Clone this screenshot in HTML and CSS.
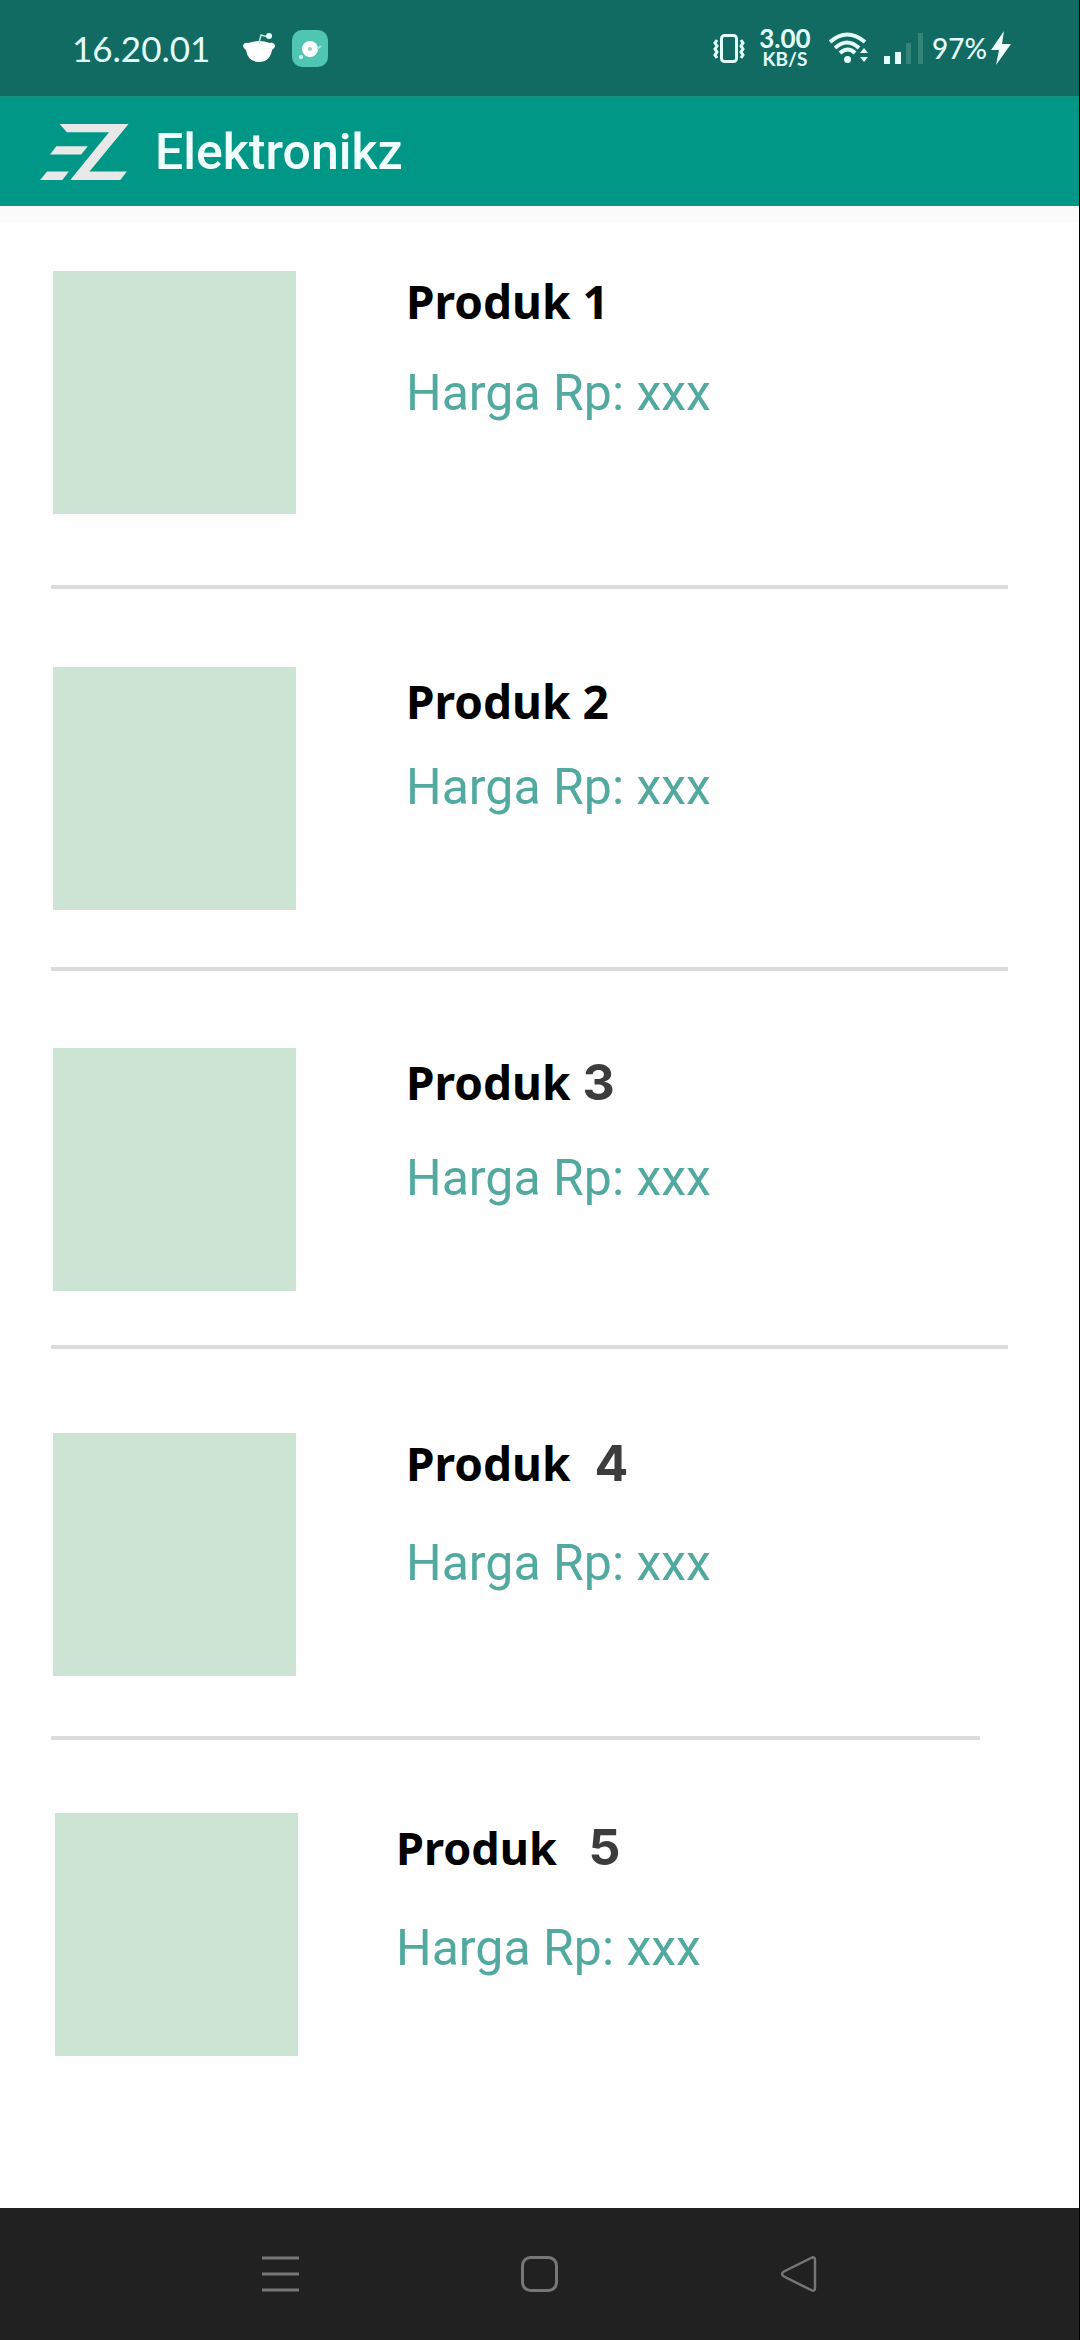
FILE: index.html
```html
<!DOCTYPE html>
<html lang="id">
<head>
<meta charset="utf-8">
<meta name="viewport" content="width=device-width, initial-scale=1">
<title>Elektronikz</title>
<link rel="stylesheet" href="styles.css">
</head>
<body>
<div class="status">
  <div class="status-left">
    <span class="clock">16.20.01</span>
    <svg class="reddit" width="34" height="32" viewBox="0 0 34 32" aria-hidden="true">
      <path d="M1 14q1-4 5-3q11-4 22 0q4-1 5 3q0 2-3 4q-2 12-13 12T4 18q-3-2-3-4z" fill="#fff"/>
      <path d="M17 11l2-8 7 2" fill="none" stroke="#b8e4dc" stroke-width="1.5"/>
      <circle cx="27" cy="4" r="3" fill="#e4fffa"/>
    </svg>
    <svg width="36" height="37" viewBox="0 0 36 37" aria-hidden="true">
      <rect width="36" height="37" rx="10" fill="#50c5b1"/>
      <circle cx="18" cy="19" r="8" fill="#fff"/>
      <circle cx="18" cy="19" r="2" fill="#9cc"/>
      <circle cx="9" cy="27" r="2" fill="#d8fff8"/>
      <path d="M25 19l4-3" stroke="#a5e8dc" stroke-width="2"/>
    </svg>
  </div>
  <div class="status-right">
    <svg width="32" height="29" viewBox="0 0 32 29" fill="none" stroke="#e4fffb" aria-hidden="true">
      <rect x="8.500" y="1.500" width="15" height="26" rx="3" stroke-width="3"/>
      <path d="M4 6l-2 3 2 3-2 3 2 3-2 3 2 3M28 6l2 3-2 3 2 3-2 3 2 3-2 3" stroke-width="3"/>
    </svg>
    <div class="speed"><span class="speed-value">3.00</span><span class="speed-unit">KB/S</span></div>
    <svg class="wifi" width="40" height="32" viewBox="0 0 40 32" fill="none" stroke="#e4fffb" aria-hidden="true">
      <path d="M1 10Q18-5 36 10M6 16q12-11 24 0M11 21q8-7 15 0" stroke-width="4"/>
      <circle cx="18.500" cy="27.500" r="3.500" fill="#e4fffb" stroke="none"/>
      <path d="M31 21l4-5 4 5zM31 25h8l-4 5z" fill="#e4fffb" stroke="none"/>
    </svg>
    <svg class="signal" width="39" height="31" viewBox="0 0 39 31" aria-hidden="true">
      <path d="M0 23h6v8H0zM11 19h6v12h-6z" fill="#e4fffb"/>
      <path d="M22 10h5v21h-5zM34 0h5v31h-5z" fill="#34847a"/>
    </svg>
    <span class="battery">97%</span>
    <svg width="20" height="34" viewBox="0 0 20 34" aria-hidden="true"><path d="M13 0L0 19h8L5 34 20 13h-9z" fill="#f0fffd"/></svg>
  </div>
</div>

<header class="appbar">
  <svg class="logo" width="89" height="56" viewBox="119 369 268 169" fill="#e8e8e8" aria-hidden="true">
    <path d="M178 369H386L268 512H381L361 538H210L327 394H200z"/>
    <path d="M168 436H263L243 461H149z"/>
    <path d="M140 512H206L186 538H119z"/>
  </svg>
  <h1 class="brand">Elektronikz</h1>
</header>

<main class="content">
  <ul class="products">
    <li class="product first">
      <div class="thumb"></div>
      <div class="info"><h2 class="name">Produk 1</h2><p class="price">Harga Rp: xxx</p></div>
    </li>
    <li class="product second">
      <div class="thumb"></div>
      <div class="info"><h2 class="name">Produk 2</h2><p class="price">Harga Rp: xxx</p></div>
    </li>
    <li class="product third">
      <div class="thumb"></div>
      <div class="info"><h2 class="name">Produk <span class="number">3</span></h2><p class="price">Harga Rp: xxx</p></div>
    </li>
    <li class="product fourth">
      <div class="thumb"></div>
      <div class="info"><h2 class="name">Produk <span class="number">4</span></h2><p class="price">Harga Rp: xxx</p></div>
    </li>
    <li class="product fifth">
      <div class="thumb"></div>
      <div class="info"><h2 class="name">Produk <span class="number">5</span></h2><p class="price">Harga Rp: xxx</p></div>
    </li>
  </ul>
</main>

<nav class="navbar" aria-label="Sistem">
  <button class="nav-button" type="button" aria-label="Menu">
    <svg width="37" height="36" viewBox="0 0 37 36" fill="none" stroke="#777" stroke-width="3"><path d="M0 2h37M0 18h37M0 34h37"/></svg>
  </button>
  <button class="nav-button" type="button" aria-label="Beranda">
    <svg width="37" height="36" viewBox="0 0 37 36" fill="none" stroke="#777" stroke-width="3"><rect x="1.500" y="1.500" width="34" height="33" rx="8"/></svg>
  </button>
  <button class="nav-button" type="button" aria-label="Kembali">
    <svg width="37" height="36" viewBox="0 0 37 36" fill="none" stroke="#777" stroke-width="2.500"><path d="M31 2Q35 0 35 4V32Q35 36 31 34L4 20.500Q0 18 4 15.500z"/></svg>
  </button>
</nav>
</body>
</html>
```

FILE: styles.css
```css
* {
  box-sizing: border-box;
}

body {
  margin: 0;
  min-height: 100vh;
  display: flex;
  flex-direction: column;
  background: #fefefe;
  border-right: 1px solid #000;
  font-family: Roboto, sans-serif;
}

svg {
  display: block;
  flex: none;
}

.status {
  display: flex;
  justify-content: space-between;
  align-items: center;
  height: 96px;
  padding: 0 68px 0 72px;
  background: #116b62;
  color: #e4fffb;
  font-family: Lato, sans-serif;
}

.status-left,
.status-right {
  display: flex;
  align-items: center;
}

.clock {
  font-size: 35px;
}

.reddit {
  margin: 0 16px 0 32px;
}

.speed {
  display: flex;
  flex-direction: column;
  align-items: center;
  width: 52px;
  margin: 0 18px 0 14px;
  font-weight: 700;
}

.speed-value {
  font-size: 26px;
  line-height: 22px;
}

.speed-unit {
  font-size: 19px;
  line-height: 20px;
}

.signal {
  margin: 0 9px 0 15px;
}

.battery {
  margin-right: 4px;
  font-size: 28px;
  font-weight: 500;
}

.appbar {
  display: flex;
  align-items: center;
  gap: 26px;
  height: 110px;
  padding: 0 40px;
  border-top: 2px solid #17907f;
  background: #009787;
}

.brand {
  margin: 0;
  color: #f0fffd;
  font-size: 50px;
  font-weight: 500;
  line-height: 60px;
}

.content {
  flex: 1;
  border-top: 16px solid #fafafa;
}

.products {
  margin: 0;
  padding: 0;
  list-style: none;
}

.product {
  display: flex;
  gap: 110px;
  margin: 0 71px 0 51px;
  padding-left: 2px;
  border-bottom: 4px solid #dcdcdc;
}

.thumb {
  flex: none;
  width: 243px;
  height: 243px;
  background: #cde3d3;
}

.info {
  display: flex;
  flex-direction: column;
  gap: 32px;
  padding-top: 4px;
}

.name,
.price {
  margin: 0;
  line-height: 60px;
  white-space: nowrap;
}

.name {
  color: #000;
  font-family: "Noto Sans", sans-serif;
  font-size: 46px;
  font-weight: 700;
}

.number {
  color: #3c3c3c;
  font-family: Inter, sans-serif;
  font-size: 50px;
}

.price {
  color: #52a99f;
  font-size: 50px;
}

.first {
  padding-top: 49px;
  padding-bottom: 71px;
}

.first .info,
.fourth .info {
  padding-top: 0;
}

.second {
  padding-top: 78px;
  padding-bottom: 57px;
}

.second .info {
  gap: 26px;
}

.third {
  padding-top: 77px;
  padding-bottom: 54px;
}

.third .info {
  gap: 36px;
}

.fourth {
  margin-right: 99px;
  padding-top: 84px;
  padding-bottom: 60px;
}

.fourth .info,
.fifth .info {
  gap: 40px;
}

.fourth .number {
  margin-left: 12px;
}

.fifth {
  gap: 98px;
  padding-top: 73px;
  padding-left: 4px;
  border-bottom: 0;
}

.fifth .name {
  font-size: 45px;
}

.fifth .number {
  margin-left: 20px;
}

.navbar {
  display: flex;
  justify-content: space-around;
  height: 132px;
  padding: 0 14%;
  background: #212121;
}

.nav-button {
  display: flex;
  align-items: center;
  padding: 0;
  border: 0;
  background: none;
}
```
